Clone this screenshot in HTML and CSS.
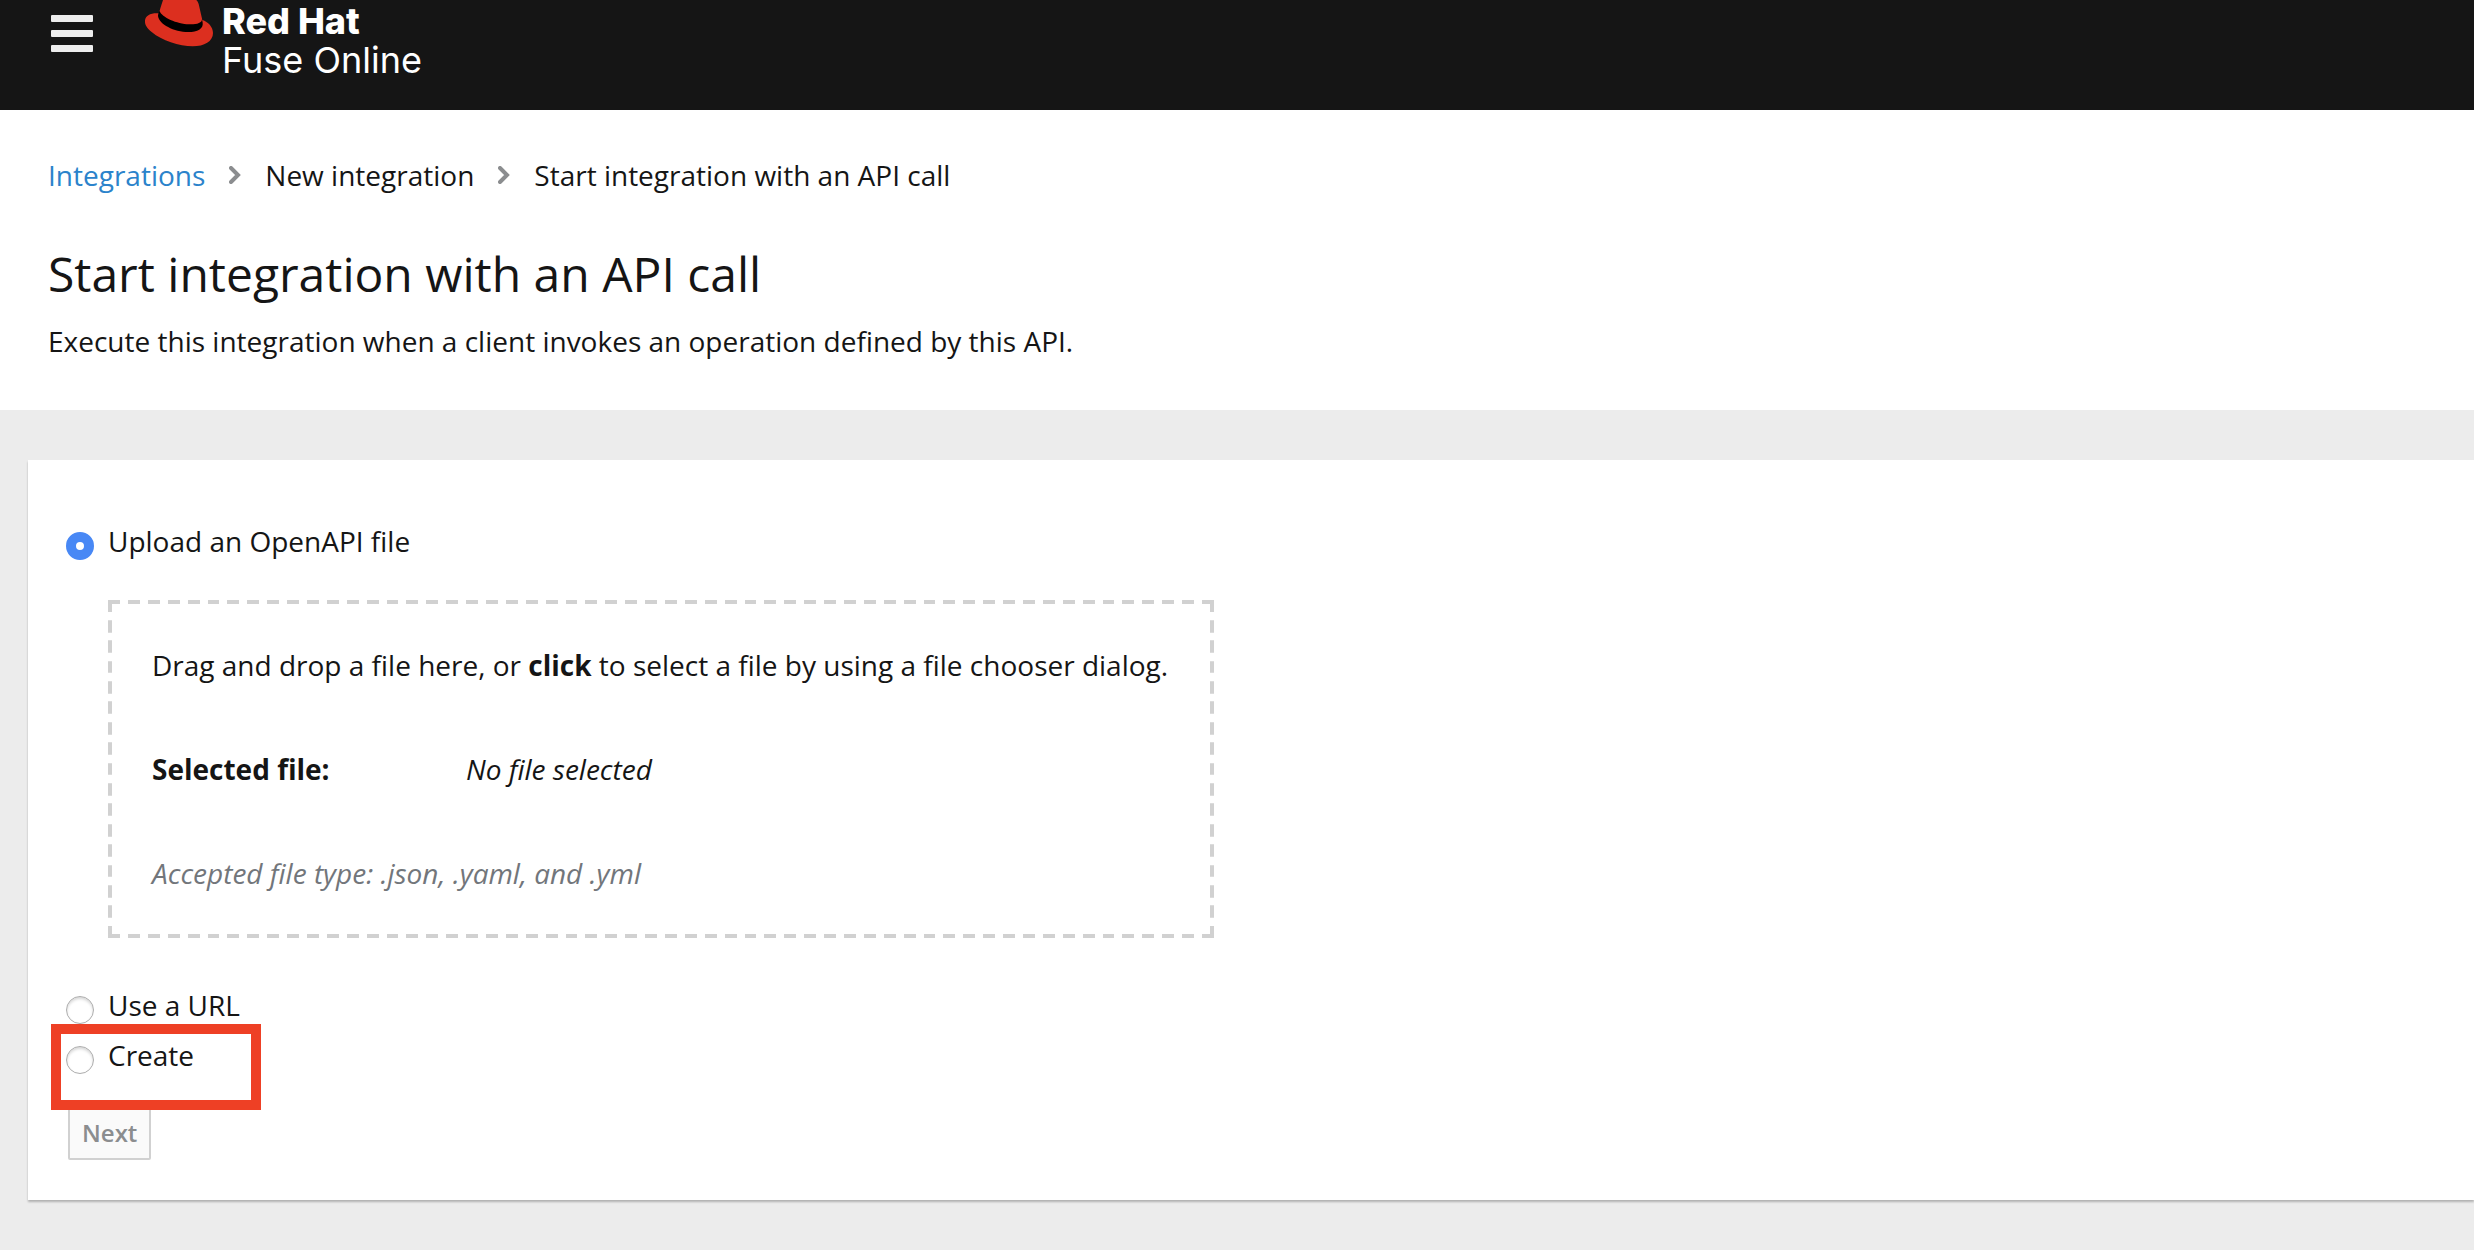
FILE: index.html
```html
<!DOCTYPE html>
<html lang="en">
<head>
<meta charset="utf-8">
<meta name="viewport" content="width=device-width, initial-scale=1">
<title>Start integration with an API call</title>
<link rel="stylesheet" href="styles.css">
</head>
<body>
<header class="masthead">
  <button class="menu-toggle" type="button" aria-label="Toggle navigation">
    <span class="menu-bar"></span>
    <span class="menu-bar"></span>
    <span class="menu-bar"></span>
  </button>
  <a class="brand" href="#">
    <svg class="brand-hat" width="70" height="47" viewBox="72 0 210 141" aria-hidden="true">
      <path fill="#dc2f1f" d="M129 0H229Q234 4 236 12L247 60C264 66 279 80 279 99C279 124 253 139 218 139C178 139 124 121 96 97C80 84 74 73 75 62C76 46 93 38 117 40Q120 27 129 0Z"/>
      <path fill="#000" d="M119 33C116 37 114 43 114 48C117 73 162 96 205 96C232 96 251 86 248 68L246 57C247 69 229 74 207 73C171 72 125 52 119 33Z"/>
    </svg>
    <span class="brand-text">
      <span class="brand-company">Red Hat</span>
      <span class="brand-product">Fuse Online</span>
    </span>
  </a>
</header>

<main>
  <section class="page-header">
    <nav aria-label="Breadcrumb">
      <ol class="breadcrumb">
        <li><a href="#">Integrations</a></li>
        <li class="crumb">
          <svg class="chevron" width="12" height="18" viewBox="0 0 12 18" aria-hidden="true"><path d="M2 2L9 9L2 16" fill="none" stroke="#8b8d8f" stroke-width="4" stroke-linecap="round"/></svg>
          New integration
        </li>
        <li class="crumb" aria-current="page">
          <svg class="chevron" width="12" height="18" viewBox="0 0 12 18" aria-hidden="true"><path d="M2 2L9 9L2 16" fill="none" stroke="#8b8d8f" stroke-width="4" stroke-linecap="round"/></svg>
          Start integration with an API call
        </li>
      </ol>
    </nav>
    <h1 class="page-title">Start integration with an API call</h1>
    <p class="page-description">Execute this integration when a client invokes an operation defined by this API.</p>
  </section>

  <section class="page-body">
    <form class="card">
      <div class="option">
        <input type="radio" id="method-file" name="method" checked>
        <label for="method-file">Upload an OpenAPI file</label>
      </div>
      <label class="dropzone">
        <input class="file-input" type="file" accept=".json,.yaml,.yml">
        <span>Drag and drop a file here, or <strong>click</strong> to select a file by using a file chooser dialog.</span>
        <span class="selected-file">
          <strong>Selected file:</strong>
          <em>No file selected</em>
        </span>
        <em class="hint">Accepted file type: .json, .yaml, and .yml</em>
      </label>
      <div class="option">
        <input type="radio" id="method-url" name="method">
        <label for="method-url">Use a URL</label>
      </div>
      <div class="option option-highlighted">
        <input type="radio" id="method-create" name="method">
        <label for="method-create">Create</label>
      </div>
      <button class="next-button" type="submit" disabled>Next</button>
    </form>
  </section>
</main>
</body>
</html>
```
FILE: styles.css
```css
*,
*::after {
  box-sizing: border-box;
}

body {
  margin: 0;
  background: #ececec;
  color: #151515;
  font-family: "Open Sans", "Noto Sans", sans-serif;
  font-size: 28px;
  line-height: 42px;
}

/* Masthead */
.masthead {
  display: flex;
  align-items: flex-start;
  gap: 51px;
  padding: 0 51px 30px;
  background: #151515;
}

.menu-toggle {
  display: flex;
  flex-direction: column;
  gap: 8px;
  margin-top: 15px;
  padding: 0;
  border: 0;
  background: none;
}

.menu-bar {
  width: 42px;
  height: 7px;
  border-radius: 1px;
  background: #ededed;
}

.brand {
  display: flex;
  align-items: flex-start;
  gap: 8px;
  color: #fff;
  text-decoration: none;
}

.brand-text {
  display: flex;
  flex-direction: column;
  padding-top: 2px;
  font-family: Inter, "Open Sans", sans-serif;
  font-size: 36px;
  line-height: 39px;
}

.brand-company {
  font-weight: 800;
}

/* Page header */
.page-header {
  padding: 44px 48px 48px;
  background: #fff;
}

.breadcrumb {
  display: flex;
  flex-wrap: wrap;
  gap: 24px;
  margin: 0;
  padding: 0;
  list-style: none;
}

.breadcrumb a {
  color: #2b83cb;
  text-decoration: none;
}

.crumb {
  display: flex;
  align-items: center;
  gap: 24px;
}

.page-title {
  margin: 46px 0 14px;
  font-size: 48px;
  font-weight: 400;
  line-height: 64px;
}

.page-description {
  margin: 0;
}

/* Card */
.page-body {
  padding: 50px 0 50px 28px;
}

.card {
  padding: 60px 38px 40px;
  background: #fff;
  box-shadow: 0 2px 2px rgba(3, 3, 3, 0.25);
}

.option {
  display: flex;
  align-items: flex-start;
  gap: 14px;
}

.option input {
  appearance: none;
  width: 28px;
  height: 28px;
  margin: 12px 0 0;
  border: 1px solid #adadad;
  border-radius: 50%;
  background: #fff;
  box-shadow: inset 0 2px 3px rgba(0, 0, 0, 0.16);
}

.option input:checked {
  border: 10px solid #4888f5;
  box-shadow: none;
}

/* The border image gives 12px dashes with 8px gaps and solid corners */
.dropzone {
  display: flex;
  flex-direction: column;
  gap: 62px;
  width: fit-content;
  margin: 38px 0 46px 42px;
  padding: 40px 42px 40px 40px;
  border: 4px dashed #d1d1d1;
  border-image: url("data:image/svg+xml,%3Csvg xmlns='http://www.w3.org/2000/svg' width='52' height='52'%3E%3Cpath fill='%23d1d1d1' d='M0 0h12v4H4v8H0zM20 0h12v4H20zM40 0h12v12h-4V4h-8zM0 20h4v12H0zM48 20h4v12h-4zM0 40h4v8h8v4H0zM20 48h12v4H20zM48 40h4v12H40v-4h8z'/%3E%3C/svg%3E") 16 / 16px round;
}

.file-input {
  position: absolute;
  width: 1px;
  height: 1px;
  opacity: 0;
}

.selected-file {
  display: grid;
  grid-template-columns: 314px 1fr;
}

.hint {
  color: #72767b;
}

.option-highlighted {
  position: relative;
  margin-top: 8px;
}

.option-highlighted::after {
  content: "";
  position: absolute;
  top: -10px;
  left: -15px;
  width: 210px;
  height: 86px;
  border: 10px solid #ee4025;
  pointer-events: none;
}

.next-button {
  display: block;
  margin: 32px 0 0 2px;
  padding: 3px 12px 5px;
  border: 2px solid #d1d1d1;
  border-radius: 2px;
  background: #fafafa;
  color: #8b8d8f;
  font-family: inherit;
  font-size: 24px;
  font-weight: 600;
  line-height: 40px;
}
```
